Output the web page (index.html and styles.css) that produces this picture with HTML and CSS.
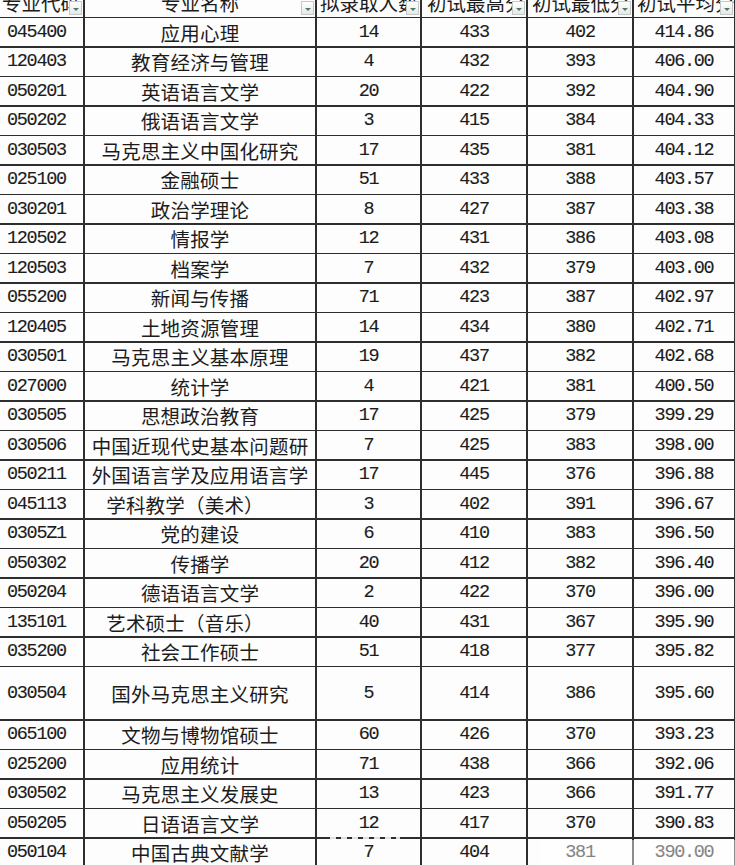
FILE: index.html
```html
<!DOCTYPE html>
<html lang="zh-CN">
<head>
<meta charset="utf-8">
<title>专业录取统计</title>
<link rel="stylesheet" href="styles.css">
</head>
<body>
<div class="sheet">
  <div class="grid">
    <div class="hd left1"><span class="ht">专业代码</span><span class="fb"></span></div>
    <div class="hd center"><span class="ht">专业名称</span><span class="fb"></span></div>
    <div class="hd left3"><span class="ht">拟录取人数</span><span class="fb"></span></div>
    <div class="hd left5"><span class="ht">初试最高分</span><span class="fb"></span></div>
    <div class="hd left4"><span class="ht">初试最低分</span><span class="fb"></span></div>
    <div class="hd left3"><span class="ht">初试平均分</span><span class="fb"></span></div>

    <div class="c code">045400</div><div class="c name">应用心理</div><div class="c num">14</div><div class="c num">433</div><div class="c num">402</div><div class="c num">414.86</div>
    <div class="c code">120403</div><div class="c name">教育经济与管理</div><div class="c num">4</div><div class="c num">432</div><div class="c num">393</div><div class="c num">406.00</div>
    <div class="c code">050201</div><div class="c name">英语语言文学</div><div class="c num">20</div><div class="c num">422</div><div class="c num">392</div><div class="c num">404.90</div>
    <div class="c code">050202</div><div class="c name">俄语语言文学</div><div class="c num">3</div><div class="c num">415</div><div class="c num">384</div><div class="c num">404.33</div>
    <div class="c code">030503</div><div class="c name">马克思主义中国化研究</div><div class="c num">17</div><div class="c num">435</div><div class="c num">381</div><div class="c num">404.12</div>
    <div class="c code">025100</div><div class="c name">金融硕士</div><div class="c num">51</div><div class="c num">433</div><div class="c num">388</div><div class="c num">403.57</div>
    <div class="c code">030201</div><div class="c name">政治学理论</div><div class="c num">8</div><div class="c num">427</div><div class="c num">387</div><div class="c num">403.38</div>
    <div class="c code">120502</div><div class="c name">情报学</div><div class="c num">12</div><div class="c num">431</div><div class="c num">386</div><div class="c num">403.08</div>
    <div class="c code">120503</div><div class="c name">档案学</div><div class="c num">7</div><div class="c num">432</div><div class="c num">379</div><div class="c num">403.00</div>
    <div class="c code">055200</div><div class="c name">新闻与传播</div><div class="c num">71</div><div class="c num">423</div><div class="c num">387</div><div class="c num">402.97</div>
    <div class="c code">120405</div><div class="c name">土地资源管理</div><div class="c num">14</div><div class="c num">434</div><div class="c num">380</div><div class="c num">402.71</div>
    <div class="c code">030501</div><div class="c name">马克思主义基本原理</div><div class="c num">19</div><div class="c num">437</div><div class="c num">382</div><div class="c num">402.68</div>
    <div class="c code">027000</div><div class="c name">统计学</div><div class="c num">4</div><div class="c num">421</div><div class="c num">381</div><div class="c num">400.50</div>
    <div class="c code">030505</div><div class="c name">思想政治教育</div><div class="c num">17</div><div class="c num">425</div><div class="c num">379</div><div class="c num">399.29</div>
    <div class="c code">030506</div><div class="c name">中国近现代史基本问题研</div><div class="c num">7</div><div class="c num">425</div><div class="c num">383</div><div class="c num">398.00</div>
    <div class="c code">050211</div><div class="c name">外国语言学及应用语言学</div><div class="c num">17</div><div class="c num">445</div><div class="c num">376</div><div class="c num">396.88</div>
    <div class="c code">045113</div><div class="c name trail">学科教学（美术）</div><div class="c num">3</div><div class="c num">402</div><div class="c num">391</div><div class="c num">396.67</div>
    <div class="c code">0305Z1</div><div class="c name">党的建设</div><div class="c num">6</div><div class="c num">410</div><div class="c num">383</div><div class="c num">396.50</div>
    <div class="c code">050302</div><div class="c name">传播学</div><div class="c num">20</div><div class="c num">412</div><div class="c num">382</div><div class="c num">396.40</div>
    <div class="c code">050204</div><div class="c name">德语语言文学</div><div class="c num">2</div><div class="c num">422</div><div class="c num">370</div><div class="c num">396.00</div>
    <div class="c code">135101</div><div class="c name trail">艺术硕士（音乐）</div><div class="c num">40</div><div class="c num">431</div><div class="c num">367</div><div class="c num">395.90</div>
    <div class="c code">035200</div><div class="c name">社会工作硕士</div><div class="c num">51</div><div class="c num">418</div><div class="c num">377</div><div class="c num">395.82</div>
    <div class="c tall code">030504</div><div class="c tall name">国外马克思主义研究</div><div class="c tall num">5</div><div class="c tall num">414</div><div class="c tall num">386</div><div class="c tall num">395.60</div>
    <div class="c code">065100</div><div class="c name">文物与博物馆硕士</div><div class="c num">60</div><div class="c num">426</div><div class="c num">370</div><div class="c num">393.23</div>
    <div class="c code">025200</div><div class="c name">应用统计</div><div class="c num">71</div><div class="c num">438</div><div class="c num">366</div><div class="c num">392.06</div>
    <div class="c code">030502</div><div class="c name">马克思主义发展史</div><div class="c num">13</div><div class="c num">423</div><div class="c num">366</div><div class="c num">391.77</div>
    <div class="c code">050205</div><div class="c name">日语语言文学</div><div class="c num">12</div><div class="c num">417</div><div class="c num">370</div><div class="c num">390.83</div>
    <div class="c code">050104</div><div class="c name">中国古典文献学</div><div class="c num">7</div><div class="c num">404</div><div class="c num">381</div><div class="c num">390.00</div>
  </div>
  <div class="wm-fade"></div>
  <div class="wm-dash"></div>
</div>
</body>
</html>
```

FILE: styles.css
```css
html, body {
  margin: 0;
  padding: 0;
  background: #ffffff;
  overflow: hidden;
}

.sheet {
  position: relative;
  width: 735px;
  height: 865px;
  overflow: hidden;
}

.grid {
  display: grid;
  grid-template-columns: 83px 230px 103px 104px 104px 100px;
  column-gap: 2px;
  row-gap: 1.5px;
  background: #2e2e2e;
  border-right: 2px solid #2e2e2e;
  width: max-content;
  color: #1c1c1c;
  font-family: "Noto Sans CJK SC", sans-serif;
}

.hd {
  position: relative;
  height: 16.5px;
  background: #fdfdfd;
  overflow: hidden;
  display: flex;
  align-items: flex-end;
  font-size: 19.5px;
  white-space: nowrap;
}

.hd .ht {
  line-height: 20px;
  padding-bottom: 3.5px;
}

.hd.center { justify-content: center; }
.hd.left1 { padding-left: 2px; }
.hd.left3 { padding-left: 3px; }
.hd.left4 { padding-left: 4px; }
.hd.left5 { padding-left: 5px; }

.fb {
  position: absolute;
  right: 1px;
  top: 1px;
  width: 13px;
  height: 14px;
  border: 1px solid #c4c8c6;
  background: linear-gradient(#ffffff, #e6e8e7);
  box-sizing: border-box;
}

.fb::after {
  content: "";
  position: absolute;
  left: 3px;
  top: 6px;
  border-left: 3px solid transparent;
  border-right: 3px solid transparent;
  border-top: 3px solid #4f7a66;
}

.c {
  height: 28px;
  background: #fdfdfd;
  display: flex;
  align-items: center;
  white-space: nowrap;
  overflow: hidden;
}

.c.tall { height: 52px; }

.code {
  padding-left: 7px;
  font-family: "Liberation Mono", monospace;
  font-size: 18.5px;
  letter-spacing: -1.3px;
  -webkit-text-stroke: 0.12px #1c1c1c;
}

.name {
  justify-content: center;
  font-size: 19.5px;
  letter-spacing: 0.2px;
}

.name.trail {
  padding-right: 30px;
}

.num {
  justify-content: center;
  font-family: "Liberation Mono", monospace;
  font-size: 18.5px;
  letter-spacing: -1.3px;
  -webkit-text-stroke: 0.12px #1c1c1c;
}

.wm-fade {
  position: absolute;
  left: 540px;
  top: 840px;
  width: 195px;
  height: 25px;
  background: rgba(255, 255, 255, 0.45);
}

.wm-dash {
  position: absolute;
  left: 330px;
  top: 837px;
  width: 70px;
  height: 2px;
  background: repeating-linear-gradient(90deg, #ffffff 0 6px, transparent 6px 11px);
  opacity: 0.85;
}
```
